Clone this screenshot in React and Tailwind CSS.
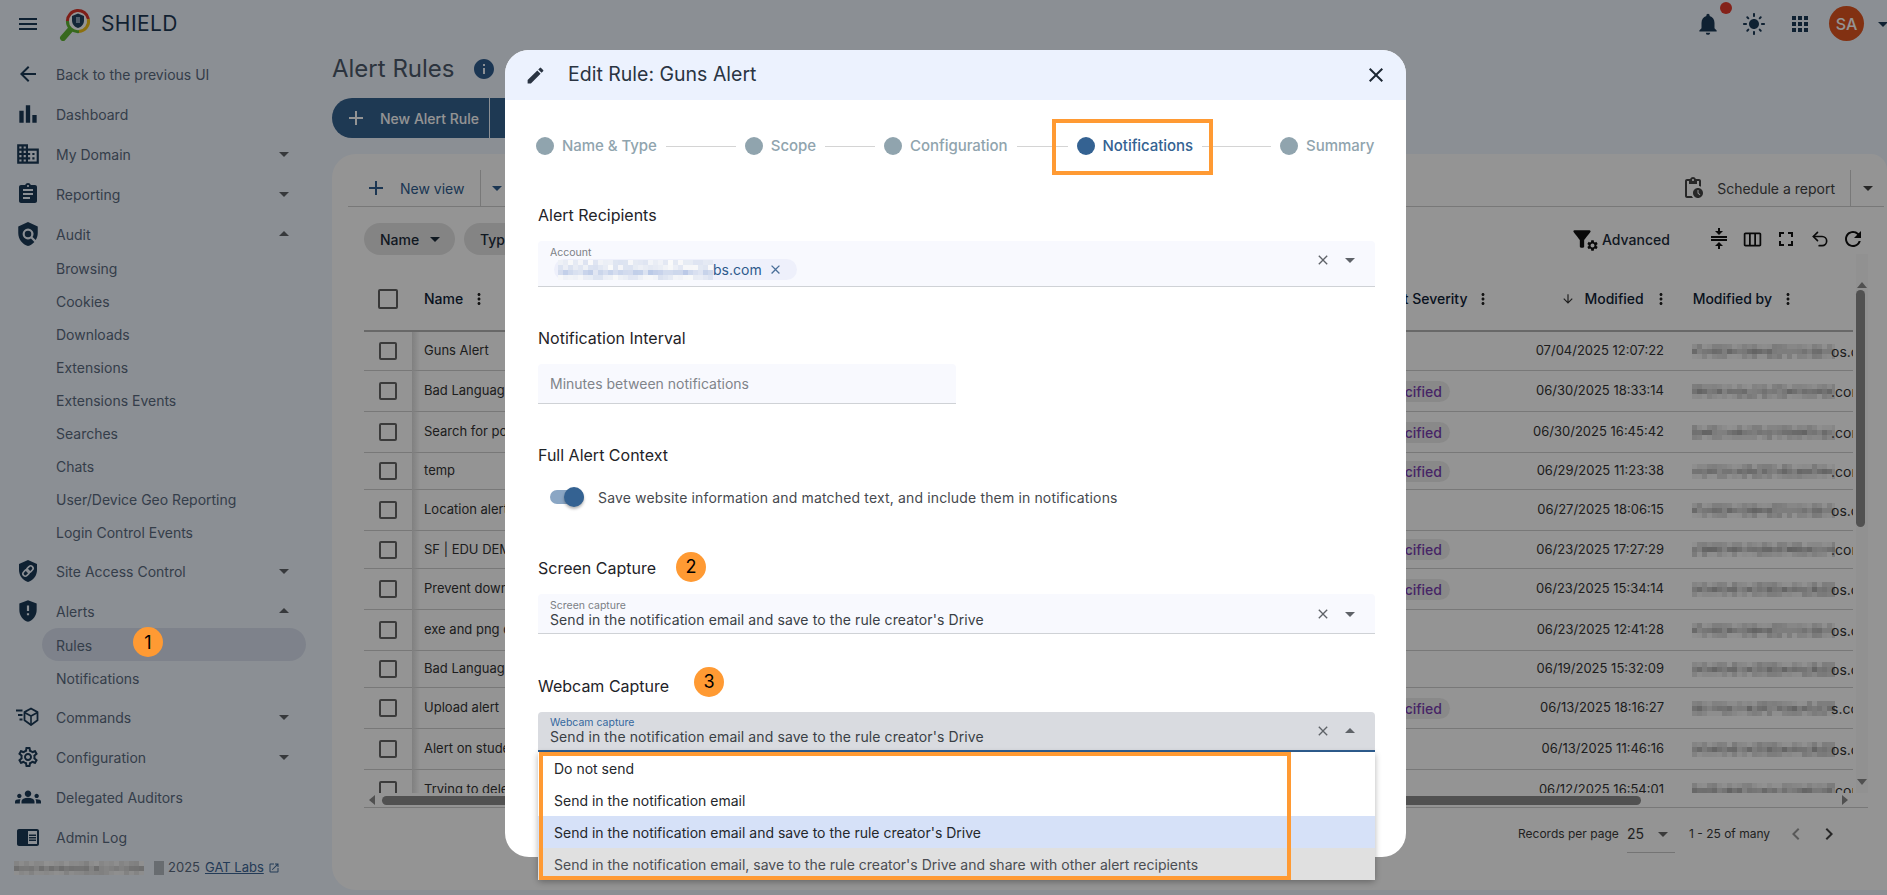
import React from 'react';
import {
  MdMenu, MdArrowBack, MdBarChart, MdDomain, MdAssignment, MdPolicy, MdGppMaybe, MdOutlineSettings, MdGroups,
  MdChromeReaderMode, MdArrowDropDown, MdArrowDropUp, MdNotifications, MdLightMode, MdApps, MdInfo, MdAdd,
  MdEdit, MdClose, MdMoreVert, MdOutlinePendingActions, MdCompress, MdOutlineViewWeek, MdFullscreen, MdRefresh,
  MdArrowDownward, MdChevronLeft, MdChevronRight, MdOpenInNew, MdSettings, MdFilterAlt,
} from 'react-icons/md';
import { Undo2 } from 'lucide-react';

function Mosaic({ seed = 1, width = 143, height = 15, cell = 5, dark = 170, light = 250, base }) {
  const rects = [];
  let s = seed * 7919 + 13;
  const next = () => { s = (s * 1103515245 + 12345) & 0x7fffffff; return s / 0x7fffffff; };
  const rows = Math.ceil(height / cell);
  const cols = Math.ceil(width / cell);
  for (let y = 0; y < rows; y++) {
    for (let x = 0; x < cols; x++) {
      const mid = y === Math.floor(rows / 2);
      const r = next();
      const t = mid ? r * 0.65 : 0.5 + r * 0.5;
      const c = Math.round(dark + (light - dark) * t);
      const fill = base ? base(t) : `rgb(${c},${c},${c})`;
      rects.push(<rect key={`${x}-${y}`} x={x * cell} y={y * cell} width={cell} height={cell} fill={fill} />);
    }
  }
  return <svg width={width} height={height} className="shrink-0" shapeRendering="crispEdges">{rects}</svg>;
}

function Logo() {
  return (
    <svg width="34" height="34" viewBox="0 0 34 34" fill="none">
      <path d="M4 31 L11 23" stroke="#5fb533" strokeWidth="6" strokeLinecap="round" />
      <circle cx="19" cy="14" r="11" fill="#fff" />
      <path d="M8.4 14 A10.6 10.6 0 0 1 29.4 12" stroke="#d9352a" strokeWidth="3" />
      <path d="M29.4 12 A10.6 10.6 0 0 1 20 24.6" stroke="#f2c21a" strokeWidth="3" />
      <path d="M20 24.6 A10.6 10.6 0 0 1 8.4 14" stroke="#5fb533" strokeWidth="3" />
      <path d="M19 6.5 L13 9 v4.5 c0 3.6 2.6 6.6 6 7.5 3.4-.9 6-3.9 6-7.5 V9 z" fill="#24425f" />
      <rect x="17" y="10" width="4" height="6" fill="#8da3b8" />
    </svg>
  );
}

function ShieldLink({ className }) {
  return (
    <svg viewBox="0 0 24 24" width="24" height="24" className={className}>
      <path d="M12 1L3 5v6c0 5.55 3.84 10.74 9 12 5.16-1.26 9-6.45 9-12V5l-9-4z" fill="currentColor" />
      <g stroke="#f0f6ff" strokeWidth="1.6" fill="none" strokeLinecap="round" transform="rotate(-45 12 12)">
        <rect x="5.8" y="9.6" width="7" height="4.8" rx="2.4" />
        <rect x="11.2" y="9.6" width="7" height="4.8" rx="2.4" />
      </g>
    </svg>
  );
}

function Cube({ className }) {
  return (
    <svg viewBox="0 0 24 24" width="24" height="24" fill="none" stroke="currentColor" className={className}>
      <path d="M15 3.5 l6.5 3.6 v8.2 L15 20 l-6.5-4.7 V7.1 z" strokeWidth="1.8" strokeLinejoin="round" />
      <path d="M8.5 7.5 L15 11 l6.5-3.5 M15 11 v8.5" strokeWidth="1.6" />
      <path d="M0 5.5 h6.5 M2 10 h4.5 M3.5 14.5 h3" strokeWidth="1.8" />
    </svg>
  );
}

const iconTone = 'text-[#1b3a57]';
const sideText = 'text-[14px] text-[#5b6b80]';

function NavRow({ icon, label, caret, className = '' }) {
  return (
    <div className={`flex items-center w-[296px] h-[40px] ${className}`}>
      <div className={`w-[56px] flex justify-center ${iconTone}`}>{icon}</div>
      <span className={sideText}>{label}</span>
      {caret === 'down' && <MdArrowDropDown size={24} className="ml-auto text-[#5f6368]" />}
      {caret === 'up' && <MdArrowDropUp size={24} className="ml-auto text-[#5f6368]" />}
    </div>
  );
}

function SubRow({ label }) {
  return <div className={`h-[33px] pl-[56px] pt-[2px] flex items-center ${sideText}`}>{label}</div>;
}

function Sidebar() {
  const audit = ['Browsing', 'Cookies', 'Downloads', 'Extensions', 'Extensions Events', 'Searches', 'Chats', 'User/Device Geo Reporting', 'Login Control Events'];
  return (
    <aside className="w-[332px] shrink-0 pt-[7px]">
      <NavRow icon={<MdArrowBack size={24} />} label="Back to the previous UI" />
      <NavRow icon={<MdBarChart size={26} />} label="Dashboard" />
      <NavRow icon={<MdDomain size={26} />} label="My Domain" caret="down" />
      <NavRow icon={<MdAssignment size={24} />} label="Reporting" caret="down" />
      <NavRow icon={<MdPolicy size={26} />} label="Audit" caret="up" />
      <div className="-mt-[3px]">
        {audit.map((a) => <SubRow key={a} label={a} />)}
      </div>
      <NavRow className="mt-[3px]" icon={<ShieldLink />} label="Site Access Control" caret="down" />
      <NavRow icon={<MdGppMaybe size={26} />} label="Alerts" caret="up" />
      <div className="-mt-[3px] ml-[42px] w-[264px] h-[33px] pl-[14px] pt-[1px] flex items-center rounded-full bg-[#d9e1f0]">
        <span className={sideText}>Rules</span>
      </div>
      <SubRow label="Notifications" />
      <NavRow className="mt-[3px]" icon={<Cube />} label="Commands" caret="down" />
      <NavRow icon={<MdOutlineSettings size={24} />} label="Configuration" caret="down" />
      <NavRow icon={<MdGroups size={26} />} label="Delegated Auditors" />
      <NavRow icon={<MdChromeReaderMode size={24} />} label="Admin Log" />
      <div className="flex items-center h-[16px] mt-[3px] pl-[14px] text-[13px] text-[#5b6b80]">
        <Mosaic seed={91} width={130} height={14} cell={5} dark={190} light={250} />
        <div className="ml-[10px] w-[10px] h-[14px] bg-[#b3bac2]" />
        <span className="ml-[4px]">2025</span>
        <span className="ml-[5px] underline text-[#3d6796]">GAT Labs</span>
        <MdOpenInNew size={12} className="ml-[4px] text-[#3d6796]" />
      </div>
    </aside>
  );
}

const rows = [
  { n: 'Guns Alert', d: '07/04/2025 12:07:22', h: 'h-[39px]', p: false, m: 'os.com', s: 3 },
  { n: 'Bad Language', d: '06/30/2025 18:33:14', h: 'h-[41px]', p: true, m: '.com', s: 5 },
  { n: 'Search for posts', d: '06/30/2025 16:45:42', h: 'h-[41px]', p: true, m: '.com', s: 8 },
  { n: 'temp', d: '06/29/2025 11:23:38', h: 'h-[37px]', p: true, m: '.com', s: 4 },
  { n: 'Location alert', d: '06/27/2025 18:06:15', h: 'h-[41px]', p: false, m: 'os.com', s: 3 },
  { n: 'SF | EDU DEMO', d: '06/23/2025 17:27:29', h: 'h-[38px]', p: true, m: '.com', s: 11 },
  { n: 'Prevent download', d: '06/23/2025 15:34:14', h: 'h-[41px]', p: true, m: 'os.com', s: 6 },
  { n: 'exe and png download', d: '06/23/2025 12:41:28', h: 'h-[41px]', p: false, m: 'os.com', s: 3 },
  { n: 'Bad Language', d: '06/19/2025 15:32:09', h: 'h-[37px]', p: false, m: 'os.com', s: 6 },
  { n: 'Upload alert', d: '06/13/2025 18:16:27', h: 'h-[41px]', p: true, m: 's.com', s: 9 },
  { n: 'Alert on student', d: '06/13/2025 11:46:16', h: 'h-[41px]', p: false, m: 'os.com', s: 6 },
  { n: 'Trying to delete', d: '06/12/2025 16:54:01', h: 'h-[41px]', p: false, m: '.com', s: 12 },
];

function Table() {
  return (
    <div className="w-[1504px] ml-[32px] relative">
      <div className="flex">
        <div className="w-[1489px] shrink-0">
          <div className="flex items-center h-[77px] pt-[12px] border-b-2 border-[#b4b4b4] text-[14px] font-medium text-[#0f2236]">
            <div className="w-[48px] flex justify-center"><div className="w-[20px] h-[20px] border-2 border-[#5f5f5f] rounded-[2px]" /></div>
            <span className="pl-[12px]">Name</span>
            <MdMoreVert size={18} className="ml-[7px] text-[#222]" />
            <span className="ml-auto">Alert Severity</span>
            <MdMoreVert size={18} className="ml-[7px] text-[#222]" />
            <MdArrowDownward size={14} className="ml-[69px] text-[#333]" />
            <span className="ml-[9px]">Modified</span>
            <MdMoreVert size={18} className="ml-[8px] text-[#222]" />
            <span className="ml-[23px]">Modified by</span>
            <MdMoreVert size={18} className="ml-[7px] mr-[56px] text-[#222]" />
          </div>
          <div className="h-[461px] overflow-hidden relative">
            {rows.map((r, i) => (
              <div key={i} className={`flex items-center shrink-0 border-b border-[#cfcfcf] text-[13px] text-[#333] ${r.h}`}>
                <div className="w-[48px] flex justify-center"><div className="w-[18px] h-[18px] border-2 border-[#666] rounded-[2px]" /></div>
                <span className="pl-[12px] flex-1">{r.n}</span>
                <div className="w-[400px] flex justify-end">
                  {r.p && <span className="h-[21px] px-[8px] rounded-full bg-[#ededed] flex items-center text-[#7a3fb0] text-[14px] font-medium">Unspecified</span>}
                </div>
                <div className="w-[214px] text-right">{r.d}</div>
                <div className="w-[161px] ml-[28px] flex items-center overflow-hidden whitespace-nowrap">
                  <Mosaic seed={r.s} />
                  <span className="-ml-[4px] text-[14px]">{r.m}</span>
                </div>
              </div>
            ))}
            <div className="absolute left-[48px] top-0 bottom-0 w-[8px] bg-gradient-to-r from-[#dcdcdc] to-transparent" />
          </div>
        </div>
        <div className="w-[15px] ml-[3px] mt-[-1px] flex flex-col items-start bg-[#fafafa] relative">
          <div className="w-[12px] flex justify-center pt-[28px]"><div className="w-0 h-0 border-x-[5px] border-x-transparent border-b-[6px] border-b-[#8a8a8a]" /></div>
          <div className="w-[9px] h-[237px] rounded-full bg-[#8c8c8c] mt-[2px]" />
          <div className="w-[12px] flex justify-center mt-[252px]"><div className="w-0 h-0 border-x-[5px] border-x-transparent border-t-[6px] border-t-[#8a8a8a]" /></div>
        </div>
      </div>
      <div className="h-[15px] border-b border-[#cfcfcf] flex items-center">
        <div className="w-0 h-0 ml-[5px] border-y-[5px] border-y-transparent border-r-[6px] border-r-[#8a8a8a]" />
        <div className="ml-[7px] w-[1259px] h-[9px] rounded-full bg-[#8c8c8c]" />
        <div className="w-0 h-0 ml-[201px] border-y-[5px] border-y-transparent border-l-[6px] border-l-[#8a8a8a]" />
      </div>
      <div className="h-[52px] flex items-center text-[12px] text-[#3a3a3a] whitespace-nowrap">
        <span className="ml-[1154px] w-[100px]">Records per page</span>
        <div className="ml-[9px] w-[48px] h-[38px] border-b border-[#c8c8c8] flex items-center justify-between text-[14px] shrink-0">
          <span>25</span>
          <MdArrowDropDown size={24} className="text-[#666]" />
        </div>
        <span className="ml-[14px] w-[81px]">1 - 25 of many</span>
        <MdChevronLeft size={24} className="ml-[14px] text-[#9a9a9a]" />
        <MdChevronRight size={24} className="ml-[9px] text-[#444]" />
      </div>
    </div>
  );
}

function Main() {
  return (
    <main className="flex-1 min-w-0">
      <div className="h-[44px] flex items-center">
        <h1 className="text-[24px] leading-none text-[#4d5a6b]">Alert Rules</h1>
        <MdInfo size={24} className="ml-[18px] text-[#2f5d8f]" />
      </div>
      <div className="mt-[7px] h-[40px] flex">
        <div className="h-full w-[157px] pl-[12px] rounded-l-full bg-[#35628f] flex items-center text-white">
          <MdAdd size={24} />
          <span className="ml-[12px] text-[14px] font-medium">New Alert Rule</span>
        </div>
        <div className="h-full w-[60px] ml-[1px] bg-[#35628f] rounded-r-full" />
      </div>
      <div className="mt-[16px] h-[736px] bg-white rounded-tl-[24px] rounded-bl-[24px] rounded-tr-[16px] pt-[16px]">
        <div className="ml-[16px] w-[1536px] h-[37px] border-b border-[#cfcfcf] flex items-start">
          <div className="h-[36px] flex items-center text-[#2f5d8f]">
            <MdAdd size={24} className="ml-[16px]" />
            <span className="ml-[12px] text-[14px]">New view</span>
          </div>
          <div className="ml-[16px] w-px h-[36px] bg-[#cfcfcf]" />
          <MdArrowDropDown size={24} className="mt-[6px] ml-[4px] text-[#2f5d8f]" />
          <div className="ml-auto h-[36px] flex items-center text-[#444]">
            <MdOutlinePendingActions size={24} />
            <span className="ml-[12px] text-[14px]">Schedule a report</span>
            <div className="ml-[15px] w-px h-[36px] bg-[#cfcfcf]" />
            <MdArrowDropDown size={24} className="ml-[5px] mr-[4px] text-[#444]" />
          </div>
        </div>
        <div className="ml-[32px] w-[1504px] mt-[16px] h-[32px] flex items-center text-[14px] text-[#1c2b3a]">
          <div className="h-full w-[91px] pl-[16px] rounded-full bg-[#e4e4e4] flex items-center font-medium">
            Name<MdArrowDropDown size={24} className="ml-[4px]" />
          </div>
          <div className="h-full w-[91px] ml-[9px] pl-[16px] rounded-full bg-[#e4e4e4] flex items-center font-medium">Type</div>
          <MdFilterAlt size={26} className="ml-[1014px] text-[#111]" />
          <MdSettings size={13} className="-ml-[9px] mt-[12px] text-[#111]" />
          <span className="ml-[3px] font-medium">Advanced</span>
          <MdCompress size={24} className="ml-[37px] text-[#111]" />
          <MdOutlineViewWeek size={21} className="ml-[11px] mr-[1px] text-[#111]" />
          <MdFullscreen size={24} className="ml-[10px] text-[#111]" />
          <Undo2 size={20} strokeWidth={2} className="ml-[12px] text-[#111]" />
          <MdRefresh size={24} className="ml-[11px] text-[#111]" />
        </div>
        <Table />
      </div>
    </main>
  );
}

function TopBar() {
  return (
    <header className="h-[47px] flex items-center">
      <MdMenu size={24} className="ml-[16px] text-[#1b3a57]" />
      <div className="ml-[19px]"><Logo /></div>
      <span className="ml-[8px] text-[21px] text-[#1e3a55] tracking-[0.4px]">SHIELD</span>
      <div className="ml-auto flex items-center relative">
        <MdNotifications size={26} className="text-[#1b3a57]" />
        <div className="absolute left-[25px] -top-[4px] w-[12px] h-[12px] rounded-full bg-[#e33b2e]" />
        <MdLightMode size={24} className="ml-[21px] text-[#1b3a57]" />
        <MdApps size={24} className="ml-[22px] text-[#1b3a57]" />
        <div className="ml-[17px] w-[35px] h-[35px] rounded-full bg-[#e0551f] flex items-center justify-center text-white text-[16px] font-medium">SA</div>
        <MdArrowDropDown size={24} className="ml-[7px] -mr-[8px] text-[#1b3a57]" />
      </div>
    </header>
  );
}

function Badge({ n, className = '' }) {
  return (
    <div className={`w-[30px] h-[30px] rounded-full bg-[#ff9a33] flex items-center justify-center text-[18px] text-black ${className}`}>{n}</div>
  );
}

function Stepper() {
  const line = 'h-px bg-[#d4d4d4] mx-[9px]';
  const Step = ({ label, active }) => (
    <div className="flex items-center">
      <div className={`w-[18px] h-[18px] rounded-full ${active ? 'bg-[#346292]' : 'bg-[#90a4ae]'}`} />
      <span className={`ml-[8px] text-[15px] font-medium tracking-[-0.05px] ${active ? 'text-[#346292]' : 'text-[#90a4ae]'}`}>{label}</span>
    </div>
  );
  return (
    <div className="mt-[28px] h-[36px] ml-[31px] flex items-center">
      <Step label="Name & Type" />
      <div className={`${line} w-[70px]`} />
      <Step label="Scope" />
      <div className={`${line} w-[50px]`} />
      <Step label="Configuration" />
      <div className={`${line} w-[51px]`} />
      <Step label="Notifications" active />
      <div className={`${line} w-[69px]`} />
      <Step label="Summary" />
    </div>
  );
}

function SelectField({ label, value, focused, open }) {
  return (
    <div className={`h-[40px] rounded-t-[4px] flex items-center pl-[12px] pr-[13px] ${focused ? 'bg-[#d9dbe0] border-b-2 border-[#2f5f92]' : 'bg-[#f8f9fe] border-b border-[#cfd2d6]'}`}>
      <div className="flex-1 min-w-0">
        <div className={`text-[10.5px] leading-[12px] ${focused ? 'text-[#35689e]' : 'text-[#7b7f85]'}`}>{label}</div>
        <div className="text-[14px] leading-[16px] text-[#3a3f45] tracking-[0.1px]">{value}</div>
      </div>
      <MdClose size={16} className="text-[#5f6368]" />
      {open ? <MdArrowDropUp size={24} className="ml-[7px] text-[#5f6368]" /> : <MdArrowDropDown size={24} className="ml-[7px] text-[#5f6368]" />}
    </div>
  );
}

function Modal() {
  const label = 'h-[24px] pt-[1px] flex items-center text-[16px] text-[#1f2328]';
  const opts = [
    { t: 'Do not send', c: 'bg-white text-[#24272b]' },
    { t: 'Send in the notification email', c: 'bg-white text-[#24272b]' },
    { t: "Send in the notification email and save to the rule creator's Drive", c: 'bg-[#d6e1f8] text-[#24272b]' },
    { t: "Send in the notification email, save to the rule creator's Drive and share with other alert recipients", c: 'bg-[#e0e0e0] text-[#4a4d52]' },
  ];
  return (
    <div className="absolute left-[505px] top-[50px] w-[901px] h-[807px] rounded-[24px] bg-white">
      <div className="h-[50px] rounded-t-[24px] bg-[#ecf2fe] flex items-center px-[20px]">
        <MdEdit size={21} className="text-[#2a3442]" />
        <span className="ml-[22px] text-[19.5px] text-[#2a3442]">Edit Rule: Guns Alert</span>
        <MdClose size={24} className="ml-auto -mr-[2px] text-[#1c2733]" />
      </div>
      <Stepper />
      <div className="mt-[38px] pl-[33px] w-[870px]">
        <div className={label}>Alert Recipients</div>
        <div className="mt-[15px] h-[46px] bg-[#f8f9fe] border-b border-[#cfd2d6] rounded-t-[4px] flex pl-[12px] pr-[13px]">
          <div className="flex-1">
            <div className="mt-[6px] text-[10.5px] leading-[12px] text-[#7b7f85]">Account</div>
            <div className="ml-[4px] w-[243px] h-[21px] rounded-full bg-[#eef0fb] flex items-center text-[14px] text-[#2d5a8c]">
              <div className="ml-[4px]"><Mosaic seed={17} width={155} height={20} cell={5} base={(t) => `rgb(${Math.round(185 + 65 * t)},${Math.round(200 + 50 * t)},${Math.round(230 + 20 * t)})`} /></div>
              <span>bs.com</span>
              <MdClose size={15} className="ml-[6px] text-[#4a6f99]" />
            </div>
          </div>
          <div className="flex items-center h-[38px]">
            <MdClose size={16} className="text-[#5f6368]" />
            <MdArrowDropDown size={24} className="ml-[7px] text-[#5f6368]" />
          </div>
        </div>
        <div className={`${label} mt-[38px]`}>Notification Interval</div>
        <div className="mt-[15px] w-[418px] h-[40px] bg-[#f8f9fe] border-b border-[#cfd2d6] rounded-t-[4px] pl-[12px] flex items-center text-[14px] text-[#80848a]">Minutes between notifications</div>
        <div className={`${label} mt-[38px]`}>Full Alert Context</div>
        <div className="mt-[17px] h-[28px] flex items-center">
          <div className="ml-[12px] relative w-[34px] h-[14px] rounded-full bg-[#8aa6c4]">
            <div className="absolute right-0 -top-[3px] w-[20px] h-[20px] rounded-full bg-[#346292] shadow-[0_2px_3px_rgba(0,0,0,0.3)]" />
          </div>
          <span className="ml-[14px] text-[14px] text-[#46494e] tracking-[0.15px]">Save website information and matched text, and include them in notifications</span>
        </div>
        <div className={`${label} mt-[44px]`}>Screen Capture<Badge n="2" className="ml-[20px] relative -top-[1px]" /></div>
        <div className="mt-[15px]">
          <SelectField label="Screen capture" value="Send in the notification email and save to the rule creator's Drive" />
        </div>
        <div className={`${label} mt-[39px]`}>Webcam Capture<Badge n="3" className="ml-[25px] relative -top-[4px]" /></div>
        <div className="mt-[15px] relative">
          <SelectField label="Webcam capture" value="Send in the notification email and save to the rule creator's Drive" focused open />
          <div className="absolute left-0 top-full w-full shadow-[0_2px_6px_rgba(0,0,0,0.3)] rounded-b-[4px]">
            {opts.map((o) => (
              <div key={o.t} className={`h-[32px] flex items-center pl-[16px] pt-[1px] text-[14px] ${o.c}`}>{o.t}</div>
            ))}
            <div className="absolute left-[1px] top-0 w-[752px] h-[128px] border-4 border-[#ff9a33]" />
          </div>
        </div>
      </div>
    </div>
  );
}

export default function App() {
  return (
    <div className="relative w-[1887px] h-[895px] overflow-hidden bg-[#f0f6ff] font-['Inter',sans-serif]">
      <TopBar />
      <div className="flex">
        <Sidebar />
        <Main />
      </div>
      <div className="absolute inset-0 bg-black/42" />
      <Modal />
      <div className="absolute left-[1052px] top-[119px] w-[161px] h-[56px] border-4 border-[#ff9a33]" />
      <Badge n="1" className="absolute left-[133px] top-[627px]" />
    </div>
  );
}
